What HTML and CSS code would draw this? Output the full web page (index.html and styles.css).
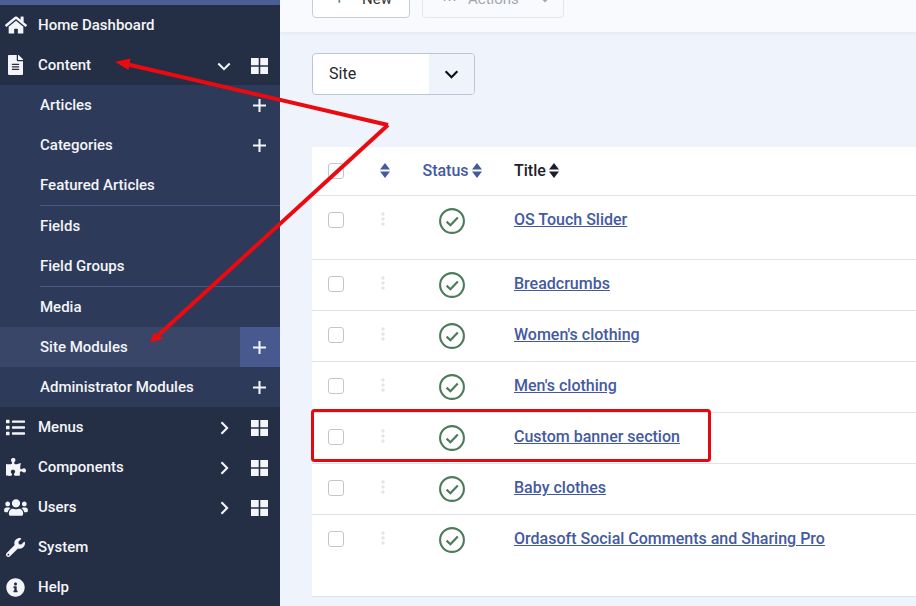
FILE: index.html
```html
<!DOCTYPE html>
<html lang="en">
<head>
    <meta charset="UTF-8">
    <meta name="viewport" content="width=device-width, initial-scale=1.0">
    <title>Site Modules</title>
    <link rel="stylesheet" href="styles.css">
</head>
<body>
    <svg class="defs" width="0" height="0">
        <symbol id="i-home" viewBox="0 0 576 512"><path d="M280.37 148.26L96 300.11V464a16 16 0 0 0 16 16l112.06-.29a16 16 0 0 0 15.92-16V368a16 16 0 0 1 16-16h64a16 16 0 0 1 16 16v95.64a16 16 0 0 0 16 16.05L464 480a16 16 0 0 0 16-16V300L295.67 148.26a12.19 12.19 0 0 0-15.3 0zM571.6 251.47L488 182.56V44.05a12 12 0 0 0-12-12h-56a12 12 0 0 0-12 12v72.61L318.47 43a48 48 0 0 0-61 0L4.34 251.47a12 12 0 0 0-1.6 16.9l25.5 31A12 12 0 0 0 45.15 301l235.22-193.74a12.19 12.19 0 0 1 15.3 0L530.9 301a12 12 0 0 0 16.9-1.6l25.5-31a12 12 0 0 0-1.7-16.93z"/></symbol>
        <symbol id="i-file" viewBox="0 0 384 512"><path d="M224 136V0H24C10.7 0 0 10.7 0 24v464c0 13.3 10.7 24 24 24h336c13.3 0 24-10.7 24-24V160H248c-13.2 0-24-10.8-24-24zm64 236c0 6.6-5.4 12-12 12H108c-6.6 0-12-5.4-12-12v-8c0-6.6 5.4-12 12-12h168c6.6 0 12 5.4 12 12v8zm0-64c0 6.6-5.4 12-12 12H108c-6.6 0-12-5.4-12-12v-8c0-6.6 5.4-12 12-12h168c6.6 0 12 5.4 12 12v8zm0-72v8c0 6.6-5.4 12-12 12H108c-6.6 0-12-5.4-12-12v-8c0-6.6 5.4-12 12-12h168c6.6 0 12 5.4 12 12zm96-114.1v6.1H256V0h6.1c6.4 0 12.5 2.5 17 7l97.9 98c4.5 4.5 7 10.6 7 16.9z"/></symbol>
        <symbol id="i-list" viewBox="0 0 512 512"><path d="M80 368H16a16 16 0 0 0-16 16v64a16 16 0 0 0 16 16h64a16 16 0 0 0 16-16v-64a16 16 0 0 0-16-16zm0-320H16A16 16 0 0 0 0 64v64a16 16 0 0 0 16 16h64a16 16 0 0 0 16-16V64a16 16 0 0 0-16-16zm0 160H16a16 16 0 0 0-16 16v64a16 16 0 0 0 16 16h64a16 16 0 0 0 16-16v-64a16 16 0 0 0-16-16zm416 176H176a16 16 0 0 0-16 16v32a16 16 0 0 0 16 16h320a16 16 0 0 0 16-16v-32a16 16 0 0 0-16-16zm0-320H176a16 16 0 0 0-16 16v32a16 16 0 0 0 16 16h320a16 16 0 0 0 16-16V80a16 16 0 0 0-16-16zm0 160H176a16 16 0 0 0-16 16v32a16 16 0 0 0 16 16h320a16 16 0 0 0 16-16v-32a16 16 0 0 0-16-16z"/></symbol>
        <symbol id="i-puzzle" viewBox="0 0 576 512"><path d="M519.442 288.651c-41.519 0-59.5 31.593-82.058 31.593C377.409 320.244 432 144 432 144s-196.288 80-196.288-3.297c0-35.827 36.288-46.25 36.288-85.985C272 19.216 243.885 0 210.539 0c-34.654 0-66.366 18.891-66.366 56.346 0 41.364 31.711 59.277 31.711 81.75C175.885 207.719 0 166.758 0 166.758v333.237s178.635 41.047 178.635-28.662c0-22.473-40-40.107-40-81.471 0-37.456 29.25-56.346 63.577-56.346 33.673 0 61.788 19.216 61.788 54.717 0 39.735-36.288 50.158-36.288 85.985 0 60.803 129.675 25.73 181.23 25.73 0 0-34.725-120.101 25.827-120.101 35.962 0 46.423 36.152 86.308 36.152C556.712 416 576 387.99 576 354.443c0-34.199-18.962-65.792-56.558-65.792z"/></symbol>
        <symbol id="i-users" viewBox="0 0 640 512"><path d="M96 224c35.3 0 64-28.7 64-64s-28.7-64-64-64-64 28.7-64 64 28.7 64 64 64zm448 0c35.3 0 64-28.7 64-64s-28.7-64-64-64-64 28.7-64 64 28.7 64 64 64zm32 32h-64c-17.6 0-33.5 7.1-45.1 18.6 40.3 22.1 68.9 62 75.1 109.4h66c17.7 0 32-14.3 32-32v-32c0-35.3-28.7-64-64-64zm-256 0c61.9 0 112-50.1 112-112S381.9 32 320 32 208 82.1 208 144s50.1 112 112 112zm76.8 32h-8.3c-20.8 10-43.9 16-68.5 16s-47.6-6-68.5-16h-8.3C179.6 288 128 339.6 128 403.2V432c0 26.5 21.5 48 48 48h288c26.5 0 48-21.5 48-48v-28.8c0-63.6-51.6-115.2-115.2-115.2zm-223.7-13.4C161.5 263.1 145.6 256 128 256H64c-35.3 0-64 28.7-64 64v32c0 17.7 14.3 32 32 32h65.9c6.3-47.4 34.9-87.3 75.2-109.4z"/></symbol>
        <symbol id="i-wrench" viewBox="0 0 512 512"><path d="M507.73 109.1c-2.24-9.03-13.54-12.09-20.12-5.51l-74.36 74.36-67.88-11.31-11.31-67.88 74.36-74.36c6.62-6.62 3.43-17.9-5.66-20.16-47.38-11.74-99.55.91-136.58 37.93-39.64 39.64-50.55 97.1-34.05 147.2L18.74 402.76c-24.99 24.99-24.99 65.51 0 90.5 24.99 24.99 65.51 24.99 90.5 0l213.21-213.21c50.12 16.71 107.47 5.68 147.37-34.22 37.07-37.07 49.7-89.32 37.91-136.73zM64 472c-13.25 0-24-10.75-24-24 0-13.26 10.75-24 24-24s24 10.74 24 24c0 13.25-10.75 24-24 24z"/></symbol>
        <symbol id="i-info" viewBox="0 0 512 512"><path d="M256 8C119.043 8 8 119.083 8 256c0 136.997 111.043 248 248 248s248-111.003 248-248C504 119.083 392.957 8 256 8zm0 110c23.196 0 42 18.804 42 42s-18.804 42-42 42-42-18.804-42-42 18.804-42 42-42zm56 254c0 6.627-5.373 12-12 12h-88c-6.627 0-12-5.373-12-12v-24c0-6.627 5.373-12 12-12h12v-64h-12c-6.627 0-12-5.373-12-12v-24c0-6.627 5.373-12 12-12h64c6.627 0 12 5.373 12 12v100h12c6.627 0 12 5.373 12 12v24z"/></symbol>
        <symbol id="i-grid" viewBox="0 0 17 16"><path d="M0 0h7.700v7.200H0zM9.300 0H17v7.200H9.300zM0 8.800h7.700V16H0zM9.300 8.800H17V16H9.300z"/></symbol>
        <symbol id="i-plus" viewBox="0 0 14 14"><path d="M5.900 0h2.200v5.900H14v2.200H8.100V14H5.900V8.100H0V5.900h5.900z"/></symbol>
        <symbol id="i-down" viewBox="0 0 16 10"><path d="M1.500 1.500L8 8l6.500-6.500" fill="none" stroke="currentColor" stroke-width="2.400"/></symbol>
        <symbol id="i-right" viewBox="0 0 10 16"><path d="M1.500 1.500L8 8l-6.500 6.500" fill="none" stroke="currentColor" stroke-width="2.400"/></symbol>
        <symbol id="i-sort" viewBox="0 0 10 15"><path d="M5 0l5 6.500H0zM5 15L0 8.500h10z"/></symbol>
        <symbol id="i-dots" viewBox="0 0 4 14"><circle cx="2" cy="2" r="1.700"/><circle cx="2" cy="7" r="1.700"/><circle cx="2" cy="12" r="1.700"/></symbol>
        <symbol id="i-check" viewBox="0 0 26 26"><circle cx="13" cy="13" r="11.900" fill="none" stroke="currentColor" stroke-width="2.100"/><path d="M7.600 13.600l3.800 3.600 7.400-7.800" fill="none" stroke="currentColor" stroke-width="2.200"/></symbol>
    </svg>

    <nav class="sidebar">
        <div class="sidebar-top"></div>
        <a class="nav-item" href="#"><span class="nav-icon"><svg class="ic-home"><use href="#i-home"/></svg></span><span class="nav-label">Home Dashboard</span></a>
        <a class="nav-item" href="#">
            <span class="nav-icon"><svg class="ic-file"><use href="#i-file"/></svg></span><span class="nav-label">Content</span>
            <svg class="ic-down"><use href="#i-down"/></svg>
            <svg class="ic-grid"><use href="#i-grid"/></svg>
        </a>
        <div class="submenu">
            <a class="sub-item" href="#"><span class="nav-label">Articles</span><span class="sub-add"><svg class="ic-plus"><use href="#i-plus"/></svg></span></a>
            <a class="sub-item" href="#"><span class="nav-label">Categories</span><span class="sub-add"><svg class="ic-plus"><use href="#i-plus"/></svg></span></a>
            <a class="sub-item" href="#"><span class="nav-label">Featured Articles</span></a>
            <div class="sub-divider"></div>
            <a class="sub-item" href="#"><span class="nav-label">Fields</span></a>
            <a class="sub-item" href="#"><span class="nav-label">Field Groups</span></a>
            <div class="sub-divider"></div>
            <a class="sub-item" href="#"><span class="nav-label">Media</span></a>
            <a class="sub-item active" href="#"><span class="nav-label">Site Modules</span><span class="sub-add"><svg class="ic-plus"><use href="#i-plus"/></svg></span></a>
            <a class="sub-item" href="#"><span class="nav-label">Administrator Modules</span><span class="sub-add"><svg class="ic-plus"><use href="#i-plus"/></svg></span></a>
        </div>
        <a class="nav-item" href="#">
            <span class="nav-icon"><svg class="ic-list"><use href="#i-list"/></svg></span><span class="nav-label">Menus</span>
            <svg class="ic-right"><use href="#i-right"/></svg>
            <svg class="ic-grid"><use href="#i-grid"/></svg>
        </a>
        <a class="nav-item" href="#">
            <span class="nav-icon"><svg class="ic-puzzle"><use href="#i-puzzle"/></svg></span><span class="nav-label">Components</span>
            <svg class="ic-right"><use href="#i-right"/></svg>
            <svg class="ic-grid"><use href="#i-grid"/></svg>
        </a>
        <a class="nav-item" href="#">
            <span class="nav-icon"><svg class="ic-users"><use href="#i-users"/></svg></span><span class="nav-label">Users</span>
            <svg class="ic-right"><use href="#i-right"/></svg>
            <svg class="ic-grid"><use href="#i-grid"/></svg>
        </a>
        <a class="nav-item" href="#"><span class="nav-icon"><svg class="ic-wrench"><use href="#i-wrench"/></svg></span><span class="nav-label">System</span></a>
        <a class="nav-item" href="#"><span class="nav-icon"><svg class="ic-info"><use href="#i-info"/></svg></span><span class="nav-label">Help</span></a>
    </nav>

    <main class="content">
        <div class="toolbar">
            <button class="btn btn-new"><span class="btn-plus">+</span>New</button>
            <button class="btn btn-actions"><span class="btn-dots">&#8943;</span>Actions<svg class="ic-caret"><use href="#i-down"/></svg></button>
        </div>

        <div class="filter">
            <span class="filter-value">Site</span>
            <span class="filter-arrow"><svg class="ic-select"><use href="#i-down"/></svg></span>
        </div>

        <table class="modules">
            <thead>
                <tr>
                    <th class="col-check"><span class="checkbox"></span></th>
                    <th class="col-order"><svg class="ic-sort blue"><use href="#i-sort"/></svg></th>
                    <th class="col-status blue">Status <svg class="ic-sort"><use href="#i-sort"/></svg></th>
                    <th class="col-title">Title <svg class="ic-sort"><use href="#i-sort"/></svg></th>
                </tr>
            </thead>
            <tbody>
                <tr class="row-first">
                    <td class="col-check"><span class="checkbox"></span></td>
                    <td class="col-order"><svg class="ic-dots"><use href="#i-dots"/></svg></td>
                    <td class="col-status"><svg class="ic-check"><use href="#i-check"/></svg></td>
                    <td class="col-title"><a href="#">OS Touch Slider</a></td>
                </tr>
                <tr>
                    <td class="col-check"><span class="checkbox"></span></td>
                    <td class="col-order"><svg class="ic-dots"><use href="#i-dots"/></svg></td>
                    <td class="col-status"><svg class="ic-check"><use href="#i-check"/></svg></td>
                    <td class="col-title"><a href="#">Breadcrumbs</a></td>
                </tr>
                <tr>
                    <td class="col-check"><span class="checkbox"></span></td>
                    <td class="col-order"><svg class="ic-dots"><use href="#i-dots"/></svg></td>
                    <td class="col-status"><svg class="ic-check"><use href="#i-check"/></svg></td>
                    <td class="col-title"><a href="#">Women's clothing</a></td>
                </tr>
                <tr>
                    <td class="col-check"><span class="checkbox"></span></td>
                    <td class="col-order"><svg class="ic-dots"><use href="#i-dots"/></svg></td>
                    <td class="col-status"><svg class="ic-check"><use href="#i-check"/></svg></td>
                    <td class="col-title"><a href="#">Men's clothing</a></td>
                </tr>
                <tr>
                    <td class="col-check"><span class="checkbox"></span></td>
                    <td class="col-order"><svg class="ic-dots"><use href="#i-dots"/></svg></td>
                    <td class="col-status"><svg class="ic-check"><use href="#i-check"/></svg></td>
                    <td class="col-title"><a href="#">Custom banner section</a></td>
                </tr>
                <tr>
                    <td class="col-check"><span class="checkbox"></span></td>
                    <td class="col-order"><svg class="ic-dots"><use href="#i-dots"/></svg></td>
                    <td class="col-status"><svg class="ic-check"><use href="#i-check"/></svg></td>
                    <td class="col-title"><a href="#">Baby clothes</a></td>
                </tr>
                <tr class="row-last">
                    <td class="col-check"><span class="checkbox"></span></td>
                    <td class="col-order"><svg class="ic-dots"><use href="#i-dots"/></svg></td>
                    <td class="col-status"><svg class="ic-check"><use href="#i-check"/></svg></td>
                    <td class="col-title"><a href="#">Ordasoft Social Comments and Sharing Pro</a></td>
                </tr>
            </tbody>
        </table>
    </main>

    <!-- red annotations drawn on top of the screenshot -->
    <svg class="marks" width="916" height="606" viewBox="0 0 916 606">
        <path class="mark-line" d="M388 125L128 64.500M388 125L158 335.500"/>
        <path class="mark-head" d="M115 61.700L130.500 58.500L128.500 70zM150 342.700L154 332.700L163.500 338.500z"/>
        <rect class="mark-box" x="312.500" y="410.500" width="397" height="50" rx="2"/>
    </svg>
</body>
</html>
```

FILE: styles.css
```css
html, body {
    height: 100%;
}
body {
    margin: 0;
    width: 916px;
    height: 606px;
    overflow: hidden;
    display: flex;
    position: relative;
    font-family: Roboto, "Liberation Sans", sans-serif;
    font-size: 16px;
    background-color: #eff3fc;
    color: #1c1f29;
}
.defs {
    position: absolute;
}
svg {
    fill: currentColor;
    display: block;
}

/* sidebar */
.sidebar {
    width: 280px;
    flex: none;
    background-color: #242e45;
    color: #f4f5f8;
    font-size: 15px;
    font-weight: 500;
}
.sidebar a {
    color: inherit;
    text-decoration: none;
}
.sidebar-top {
    height: 5px;
    background-color: #4a5f94;
}
.nav-item {
    height: 40px;
    display: flex;
    align-items: center;
    padding-right: 12px;
}
.nav-icon {
    width: 38px;
    flex: none;
    display: flex;
    justify-content: center;
    padding-right: 7px;
    box-sizing: border-box;
}
.nav-label {
    flex: 1;
}
.ic-home { width: 22px; height: 20px; }
.ic-file { width: 15px; height: 20px; }
.ic-list { width: 19px; height: 19px; }
.ic-puzzle { width: 20px; height: 18px; }
.ic-users { width: 24px; height: 19px; }
.ic-wrench { width: 19px; height: 19px; }
.ic-info { width: 19px; height: 19px; }
.ic-grid {
    width: 17px;
    height: 16px;
    flex: none;
    margin-top: 2px;
}
.ic-down {
    width: 14px;
    height: 9px;
    flex: none;
    margin: 2px 20px 0 0;
}
.ic-right {
    width: 9px;
    height: 14px;
    flex: none;
    margin: 2px 22px 0 0;
}
.submenu {
    background-color: #2d3a59;
}
.sub-item {
    height: 40px;
    display: flex;
    align-items: center;
    padding-left: 40px;
}
.sub-item.active {
    background-color: #3a4668;
}
.sub-add {
    width: 40px;
    height: 40px;
    box-sizing: border-box;
    padding-right: 1px;
    display: flex;
    align-items: center;
    justify-content: center;
}
.sub-item.active .sub-add {
    background-color: #47598f;
}
.ic-plus {
    width: 13px;
    height: 13px;
}
.sub-divider {
    height: 1px;
    margin-left: 40px;
    background-color: #4a5a85;
}

/* main area */
.content {
    flex: 1;
    min-width: 0;
    display: flex;
    flex-direction: column;
    align-items: flex-start;
}
.toolbar {
    align-self: stretch;
    height: 32px;
    flex: none;
    box-sizing: border-box;
    padding: 0 32px 14px;
    display: flex;
    align-items: flex-end;
    gap: 12px;
    background-color: #f9fafd;
    box-shadow: 0 1px 4px rgba(60, 80, 140, 0.08);
}
.btn {
    height: 38px;
    flex: none;
    font: inherit;
    font-size: 15px;
    background-color: #fff;
    border: 1px solid #c6cbd8;
    border-radius: 4px;
    display: flex;
    align-items: center;
    color: #333;
}
.btn-new {
    width: 98px;
    padding: 0 0 0 22px;
}
.btn-plus {
    color: #457d54;
    width: 27px;
    text-align: left;
}
.btn-actions {
    width: 142px;
    padding: 0 0 0 19px;
    color: #a4a8b0;
    background-color: #f9fafd;
    border-color: #e4e6ed;
}
.btn-dots {
    width: 26px;
    text-align: left;
}
.ic-caret {
    width: 12px;
    height: 8px;
    margin-left: 20px;
}
.filter {
    width: 163px;
    height: 42px;
    margin: 21px 0 0 32px;
    flex: none;
    box-sizing: border-box;
    border: 1px solid #bcc4d6;
    border-radius: 4px;
    background-color: #fff;
    display: flex;
    overflow: hidden;
}
.filter-value {
    flex: 1;
    padding-left: 16px;
    line-height: 39px;
    color: #22262e;
}
.filter-arrow {
    width: 45px;
    background-color: #eff3fb;
    display: flex;
    align-items: center;
    justify-content: center;
}
.ic-select {
    width: 15px;
    height: 9px;
    color: #111;
}

/* table */
.modules {
    width: 604px;
    margin: 52px 0 0 32px;
    flex: none;
    table-layout: fixed;
    border-collapse: separate;
    border-spacing: 0;
    background-color: #fff;
}
.modules th,
.modules td {
    padding: 12px 0 0;
    vertical-align: top;
    height: 51px;
    box-sizing: border-box;
    border-bottom: 1px solid #dfe2e8;
    font-weight: 500;
}
.modules th {
    height: 49px;
    padding-top: 14px;
    font-weight: 500;
}
.modules .row-first td {
    height: 64px;
}
.modules .row-last td {
    height: 82px;
}
.col-check {
    width: 48px;
    text-align: center;
}
.col-order {
    width: 48px;
}
.col-status {
    width: 88px;
    text-align: center;
}
.modules .col-title {
    padding-left: 18px;
    text-align: left;
    line-height: 20px;
}
.modules td.col-title {
    padding-top: 14px;
    line-height: 19px;
}
.modules a {
    color: #445a9f;
}
.blue {
    color: #445a9f;
}
.checkbox {
    display: inline-block;
    width: 16px;
    height: 16px;
    box-sizing: border-box;
    vertical-align: top;
    border: 1px solid #c3c6d0;
    border-radius: 3px;
    margin-top: 4px;
    background-color: #fff;
}
th .checkbox {
    margin-top: 2px;
}
.ic-sort {
    display: inline-block;
    width: 10px;
    height: 15px;
    vertical-align: -2px;
    margin-left: -1px;
}
.col-order .ic-sort {
    margin: 2px 0 0 20px;
    display: block;
}
.ic-dots {
    width: 4px;
    height: 14px;
    margin: 4px 0 0 21px;
    color: #e3e4e8;
}
.ic-check {
    width: 26px;
    height: 26px;
    margin: 0 auto;
    color: #4c7a5a;
}

/* annotations */
.marks {
    position: absolute;
    top: 0;
    left: 0;
}
.mark-line {
    fill: none;
    stroke: #ea0a10;
    stroke-width: 4;
}
.mark-head {
    fill: #ea0a10;
}
.mark-box {
    fill: none;
    stroke: #e6080f;
    stroke-width: 3;
}
```
